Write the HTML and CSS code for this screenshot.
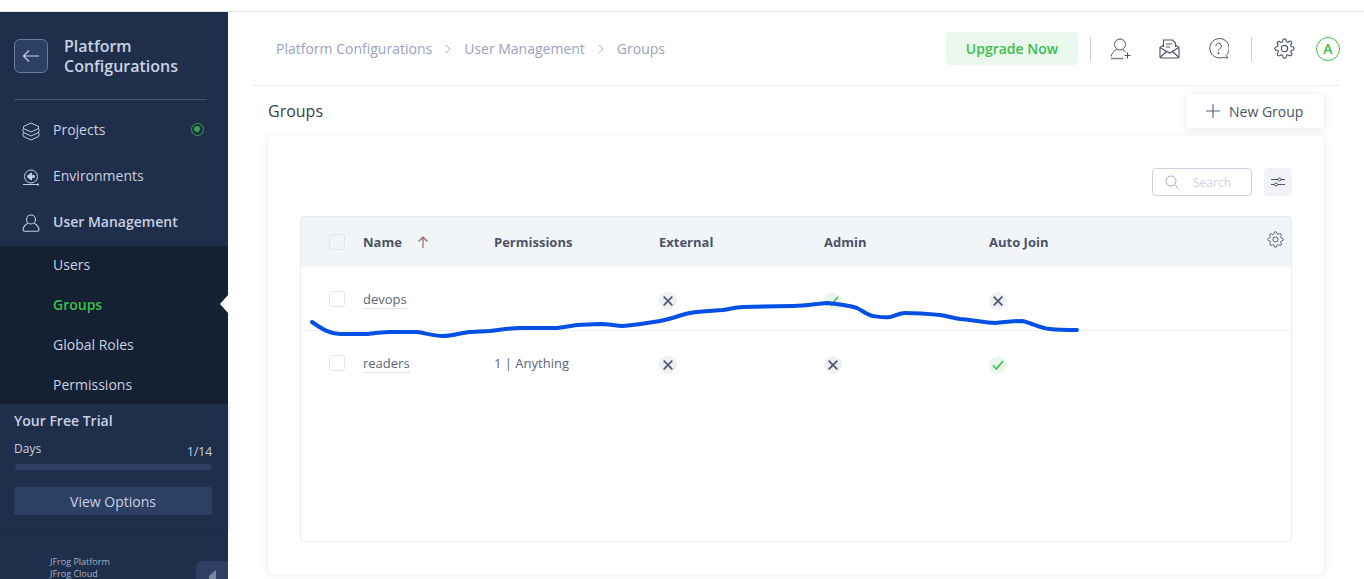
FILE: index.html
```html
<!DOCTYPE html>
<html lang="en">
<head>
  <meta charset="UTF-8" />
  <title>Groups</title>
  <link rel="stylesheet" href="styles.css">
</head>
<body>
  <div class="topStrip"></div>

  <div class="app">
    <aside class="sidebar">
      <div class="sideTitle">
        <div class="backBtn">
          <svg width="18" height="14" viewBox="0 0 18 14" fill="none" stroke="#c5cde0" stroke-width="1.2"><path d="M17 7H1.5M7 1.5 1.5 7 7 12.5"/></svg>
        </div>
        <div class="titleText">Platform Configurations</div>
      </div>
      <div class="sideLine"></div>

      <div class="navItem">
        <svg class="navIcon" width="18" height="19" viewBox="0 0 18 19" fill="none" stroke="#c5cde0" stroke-width="1"><path d="M9 1 16.500 4.500V6.500L9 10 1.500 6.500V4.500zM1.500 6.500 .8 8.500 1.500 10.500 9 14 16.500 10.500 17.200 8.500 16.500 6.500M1.500 10.500 .8 12.500 1.500 14.500 9 18 16.500 14.500 17.200 12.500 16.500 10.500"/></svg>
        <span>Projects</span>
        <span class="navDot"></span>
      </div>
      <div class="navItem">
        <svg class="navIcon" width="18" height="18" viewBox="0 0 18 18" fill="none" stroke="#c5cde0" stroke-width="1"><circle cx="9" cy="8.500" r="6.500"/><path d="M1 16.500H17M15.500 15.500l1.500 1-1.500 1"/><path d="M5.800 7.500 9.500 5V12L5.800 9.500z" fill="#c5cde0"/><circle cx="11.300" cy="8.500" r="1.300" fill="#c5cde0"/></svg>
        <span>Environments</span>
      </div>
      <div class="navItem navActive">
        <svg class="navIcon" width="18" height="18" viewBox="0 0 18 18" fill="none" stroke="#c5cde0" stroke-width="1.1"><circle cx="9" cy="5.500" r="4.500"/><path d="M5.800 9.200C3.500 10.500 1.200 13.500 1 15.500c0 1 .6 1.700 1.600 1.700h12.800c1 0 1.600-.7 1.600-1.700-.2-2-2.500-5-4.800-6.300"/></svg>
        <span>User Management</span>
      </div>

      <div class="subNav">
        <div class="subItem">Users</div>
        <div class="subItem subActive">Groups</div>
        <div class="subItem">Global Roles</div>
        <div class="subItem">Permissions</div>
      </div>

      <div class="trial">
        <div class="trialTitle">Your Free Trial</div>
        <div class="trialRow">
          <span>Days</span>
          <span class="trialCount">1/14</span>
        </div>
        <div class="trialBar"></div>
        <div class="trialBtn">View Options</div>
      </div>

      <div class="sideFoot">
        <div class="footText">
          <div>JFrog Platform</div>
          <div>JFrog Cloud</div>
        </div>
        <div class="collapseTab"><span class="collapseArrow"></span></div>
      </div>
    </aside>

    <main class="main">
      <header class="topBar">
        <div class="crumbs">
          <span>Platform Configurations</span>
          <svg width="6" height="10" viewBox="0 0 6 10" fill="none" stroke="#a9b0c6" stroke-width="1"><path d="M1 1l4 4-4 4"/></svg>
          <span>User Management</span>
          <svg width="6" height="10" viewBox="0 0 6 10" fill="none" stroke="#a9b0c6" stroke-width="1"><path d="M1 1l4 4-4 4"/></svg>
          <span>Groups</span>
        </div>
        <div class="topActions">
          <div class="upgradeBtn">Upgrade Now</div>
          <div class="vLine firstLine"></div>
          <svg class="addUser" width="22" height="22" viewBox="0 0 22 22" fill="none" stroke="#4c5368" stroke-width="1"><circle cx="10" cy="6.500" r="5.500"/><path d="M6.500 11.500C4 13 1.500 15.500 1 18.500"/><path d="M1 20.500h12.500" stroke="#7d8394" stroke-width="1.500"/><path d="M13 12c1 .5 1.800 1.200 2.500 2M17.500 14.500v6M14.500 17.500h6"/></svg>
          <svg class="mailIcon" width="21" height="20" viewBox="0 0 21 20" fill="none" stroke="#4c5368" stroke-width="1.100"><path d="M4.500 8V1h9l3 3v4"/><path d="M7 5h6M7 8h4"/><path d="M4.500 6 1 8.500V18a1 1 0 0 0 1 1h17a1 1 0 0 0 1-1V8.500L16.500 6"/><path d="M1 8.500 10.500 14 20 8.500M1 18.500 8 12M20 18.500 13 12"/></svg>
          <svg class="helpIcon" width="21" height="21" viewBox="0 0 21 21" fill="none" stroke="#4c5368" stroke-width="1"><path d="M18 17.500A9.700 9.700 0 1 0 14.500 19.500L20 20z"/><path d="M7.800 8a2.800 2.800 0 1 1 4.200 2.500c-1 .6-1.500 1.100-1.500 2.200"/><circle cx="10.500" cy="15.200" r=".6" fill="#4c5368"/></svg>
          <div class="vLine secondLine"></div>
          <svg class="gearIcon" width="21" height="21" viewBox="0 0 24 24" fill="none" stroke="#4c5368" stroke-width="1.300"><circle cx="12" cy="12" r="3.600"/><path d="M19.400 15a1.650 1.650 0 0 0 .33 1.820l.06.06a2 2 0 1 1-2.830 2.830l-.06-.06a1.650 1.650 0 0 0-2.800 1.170V21a2 2 0 1 1-4 0v-.09A1.650 1.650 0 0 0 7.300 19.700l-.06.06a2 2 0 1 1-2.830-2.830l.06-.06A1.650 1.650 0 0 0 3.090 14H3a2 2 0 1 1 0-4h.09A1.650 1.650 0 0 0 4.300 7.300l-.06-.06a2 2 0 1 1 2.830-2.830l.06.06A1.650 1.650 0 0 0 10 3.090V3a2 2 0 1 1 4 0v.09a1.650 1.650 0 0 0 2.800 1.170l.06-.06a2 2 0 1 1 2.830 2.830l-.06.06A1.650 1.650 0 0 0 20.910 10H21a2 2 0 1 1 0 4h-.09a1.650 1.650 0 0 0-1.510 1z"/></svg>
          <div class="avatar">A</div>
        </div>
      </header>

      <div class="pageHead">
        <h1 class="pageTitle">Groups</h1>
        <div class="newBtn">
          <svg width="14" height="14" viewBox="0 0 14 14" fill="none" stroke="#5a5f70" stroke-width="1.100"><path d="M7 0v14M0 7h14"/></svg>
          <span>New Group</span>
        </div>
      </div>

      <section class="card">
        <div class="toolbar">
          <div class="searchBox">
            <svg width="14" height="14" viewBox="0 0 14 14" fill="none" stroke="#a7aec2" stroke-width="1"><circle cx="6" cy="6" r="5"/><path d="M9.700 9.700 13.500 13.500"/></svg>
            <span>Search</span>
          </div>
          <div class="filterBtn">
            <svg width="14" height="10" viewBox="0 0 14 10" fill="none" stroke="#4c5368" stroke-width="1"><path d="M0 2.500h14M0 7.500h14"/><circle cx="8.500" cy="2.500" r="1.500" fill="#f0f2f7"/><circle cx="5" cy="7.500" r="1.500" fill="#f0f2f7"/></svg>
          </div>
        </div>

        <div class="grid">
          <div class="row headRow">
            <div class="cellCheck"><span class="check headCheck"></span></div>
            <div class="nameHead">Name
              <svg width="12" height="12" viewBox="0 0 12 12" fill="none" stroke="#8a5f5f" stroke-width="1.100"><path d="M6 12V1M1.500 5.500 6 1l4.500 4.500"/></svg>
            </div>
            <div>Permissions</div>
            <div>External</div>
            <div>Admin</div>
            <div>Auto Join</div>
            <svg class="colGear" width="17" height="17" viewBox="0 0 24 24" fill="none" stroke="#4c5368" stroke-width="1.300"><circle cx="12" cy="12" r="3.600"/><path d="M19.400 15a1.650 1.650 0 0 0 .33 1.820l.06.06a2 2 0 1 1-2.830 2.830l-.06-.06a1.650 1.650 0 0 0-2.800 1.170V21a2 2 0 1 1-4 0v-.09A1.650 1.650 0 0 0 7.300 19.700l-.06.06a2 2 0 1 1-2.830-2.830l.06-.06A1.650 1.650 0 0 0 3.090 14H3a2 2 0 1 1 0-4h.09A1.650 1.650 0 0 0 4.300 7.300l-.06-.06a2 2 0 1 1 2.830-2.830l.06.06A1.650 1.650 0 0 0 10 3.090V3a2 2 0 1 1 4 0v.09a1.650 1.650 0 0 0 2.800 1.170l.06-.06a2 2 0 1 1 2.830 2.830l-.06.06A1.650 1.650 0 0 0 20.910 10H21a2 2 0 1 1 0 4h-.09a1.650 1.650 0 0 0-1.510 1z"/></svg>
          </div>

          <div class="row bodyRow lined">
            <div class="cellCheck"><span class="check"></span></div>
            <div><span class="groupName">devops</span></div>
            <div></div>
            <div><span class="status no"><svg width="10" height="10" viewBox="0 0 10 10" fill="none" stroke="#565d72" stroke-width="1.900"><path d="M.7.7l8.600 8.600M9.300.7.7 9.300"/></svg></span></div>
            <div><span class="status yes"><svg width="12" height="10" viewBox="0 0 12 10" fill="none" stroke="#3fbe4f" stroke-width="1.600"><path d="M1 5.500 4.300 9 11 1"/></svg></span></div>
            <div><span class="status no"><svg width="10" height="10" viewBox="0 0 10 10" fill="none" stroke="#565d72" stroke-width="1.900"><path d="M.7.7l8.600 8.600M9.300.7.7 9.300"/></svg></span></div>
          </div>

          <div class="row bodyRow">
            <div class="cellCheck"><span class="check"></span></div>
            <div><span class="groupName">readers</span></div>
            <div>1 | Anything</div>
            <div><span class="status no"><svg width="10" height="10" viewBox="0 0 10 10" fill="none" stroke="#565d72" stroke-width="1.900"><path d="M.7.7l8.600 8.600M9.300.7.7 9.300"/></svg></span></div>
            <div><span class="status no"><svg width="10" height="10" viewBox="0 0 10 10" fill="none" stroke="#565d72" stroke-width="1.900"><path d="M.7.7l8.600 8.600M9.300.7.7 9.300"/></svg></span></div>
            <div><span class="status yes"><svg width="12" height="10" viewBox="0 0 12 10" fill="none" stroke="#3fbe4f" stroke-width="1.600"><path d="M1 5.500 4.300 9 11 1"/></svg></span></div>
          </div>
        </div>
      </section>
    </main>
  </div>

  <!-- pen stroke drawn over the screenshot -->
  <svg class="scribble" width="1364" height="579" viewBox="0 0 1364 579" fill="none" stroke="#0450e4" stroke-width="4" stroke-linecap="round" stroke-linejoin="round">
    <path d="M312 322C322 329 330 334 340 334L367 334C375 333 382 332 390 332L417 332C425 333 433 336 443 336C452 336 460 333 470 332L490 331C500 330 510 328 520 328L557 328C565 327 570 326 577 325L600 324C610 324 615 326 623 326C636 325 648 323 660 321C672 319 680 315 690 313C702 311 712 311 723 310C730 309 736 307 743 307L793 306C805 306 815 304 827 303C838 304 848 305 857 308C863 311 867 315 873 316C880 317 885 318 890 317C895 316 900 313 905 313C917 313 930 314 940 315C947 316 953 318 960 319C972 320 984 322 995 323C1004 322 1013 321 1022 321C1032 323 1040 328 1050 329C1059 330 1068 330 1077 330"/>
  </svg>
</body>
</html>
```

FILE: styles.css
```css
* {
  box-sizing: border-box;
}

html, body {
  margin: 0;
  height: 579px;
  overflow: hidden;
}

body {
  position: relative;
  background-color: #fff;
  font-family: "Open Sans", Arial, sans-serif;
  font-size: 14px;
  color: #5a6072;
}

.topStrip {
  height: 12px;
  border-bottom: 1px solid #e3e4e8;
}

.app {
  display: flex;
  height: 567px;
}

/* sidebar */
.sidebar {
  display: flex;
  flex-direction: column;
  width: 228px;
  flex-shrink: 0;
  background-color: #1f2e4a;
  color: #c9d1e3;
}

.sideTitle {
  display: flex;
  gap: 16px;
  padding: 24px 14px 0;
  height: 87px;
}

.backBtn {
  display: flex;
  align-items: center;
  justify-content: center;
  width: 34px;
  height: 34px;
  margin-top: 3px;
  background-color: #2d4064;
  border: 1px solid #6b7a98;
  border-radius: 6px;
}

.titleText {
  width: 130px;
  font-size: 16px;
  font-weight: 600;
  line-height: 20px;
  color: #c9d1e3;
}

.sideLine {
  height: 1px;
  margin: 0 21px 0 14px;
  background-color: #45536f;
}

.navItem {
  display: flex;
  align-items: center;
  gap: 13px;
  height: 46px;
  padding-left: 22px;
  padding-right: 24px;
}

.sideLine + .navItem {
  margin-top: 6px;
}

.navIcon {
  margin-top: 4px;
}

.navActive {
  height: 48px;
  padding-bottom: 2px;
  font-weight: 600;
}

.navDot {
  position: relative;
  width: 13px;
  height: 13px;
  margin-left: auto;
  border: 1.500px solid #36a447;
  border-radius: 50%;
}

.navDot::after {
  content: "";
  position: absolute;
  left: 2px;
  top: 2px;
  width: 6px;
  height: 6px;
  background-color: #36a447;
  border-radius: 50%;
}

.subNav {
  height: 158px;
  background-color: #152032;
}

.subItem {
  position: relative;
  display: flex;
  align-items: center;
  height: 40px;
  padding-left: 53px;
}

.subItem:first-child {
  margin-top: -2px;
}

.subActive {
  color: #3fbe4f;
  font-weight: 600;
}

.subActive::after {
  content: "";
  position: absolute;
  right: 0;
  top: 11px;
  border-top: 9px solid transparent;
  border-bottom: 9px solid transparent;
  border-right: 8px solid #fff;
}

.trial {
  height: 127px;
  padding: 7px 16px 0 14px;
  background-color: #1f2e4a;
  box-shadow: 1px 0 4px rgba(0,0,0,0.12);
}

.trialTitle {
  font-weight: 600;
  line-height: 20px;
}

.trialRow {
  display: flex;
  justify-content: space-between;
  margin-top: 10px;
  font-size: 12px;
  line-height: 16px;
}

.trialCount {
  margin-top: 3px;
}

.trialBar {
  height: 6px;
  margin: 4px 0 17px 1px;
  background-color: #2d4064;
  border-radius: 3px;
}

.trialBtn {
  height: 28px;
  line-height: 29px;
  text-align: center;
  background-color: #2d4064;
  border-radius: 3px;
}

.sideFoot {
  display: flex;
  flex: 1;
  justify-content: space-between;
  align-items: flex-end;
  padding-left: 50px;
}

.footText {
  margin-bottom: -1px;
  font-size: 9px;
  line-height: 12px;
  color: #a7b0c6;
}

.collapseTab {
  display: flex;
  align-items: flex-end;
  justify-content: center;
  width: 32px;
  height: 18px;
  background-color: #2d4064;
  border-top-left-radius: 6px;
}

.collapseArrow {
  border-top: 6px solid transparent;
  border-bottom: 0 solid transparent;
  border-right: 7px solid #7c88a3;
  height: 9px;
}

/* main area */
.main {
  flex: 1;
  min-width: 0;
  padding: 0 24px;
}

.topBar {
  display: flex;
  align-items: center;
  justify-content: space-between;
  height: 74px;
  padding-left: 24px;
  border-bottom: 1px solid #eceef5;
}

.crumbs {
  display: flex;
  align-items: center;
  gap: 13px;
  color: #9ba3bc;
}

.topActions {
  display: flex;
  align-items: center;
}

.upgradeBtn {
  width: 132px;
  height: 33px;
  line-height: 33px;
  text-align: center;
  font-weight: 600;
  color: #3fbe4f;
  background-color: #e9f7ec;
  border-radius: 4px;
}

.vLine {
  width: 1px;
  height: 24px;
  background-color: #c9ccd4;
}

.firstLine {
  margin-left: 12px;
}

.addUser {
  margin-left: 19px;
}

.mailIcon {
  margin-left: 27px;
}

.helpIcon {
  margin-left: 28px;
}

.secondLine {
  margin-left: 22px;
}

.gearIcon {
  margin-left: 22px;
}

.avatar {
  width: 24px;
  height: 24px;
  margin-left: 21px;
  line-height: 22px;
  text-align: center;
  font-size: 14px;
  font-weight: 600;
  color: #3fbe4f;
  border: 1px solid #3fbe4f;
  border-radius: 50%;
}

.pageHead {
  display: flex;
  align-items: flex-start;
  justify-content: space-between;
  height: 50px;
  padding: 8px 16px 0;
}

.pageTitle {
  margin: 6px 0 0;
  font-size: 16px;
  font-weight: 400;
  line-height: 22px;
  color: #3b3f4a;
}

.newBtn {
  display: flex;
  align-items: center;
  gap: 9px;
  width: 138px;
  height: 34px;
  padding-left: 20px;
  color: #4c5368;
  background-color: #fff;
  border-radius: 4px;
  box-shadow: 0 1px 8px rgba(60,70,100,0.14);
}

.card {
  height: 438px;
  margin: 0 16px;
  padding: 32px;
  background-color: #fff;
  border-radius: 4px;
  box-shadow: 0 1px 10px rgba(60,70,100,0.1);
}

.toolbar {
  display: flex;
  justify-content: flex-end;
  gap: 12px;
  height: 28px;
  margin-bottom: 20px;
}

.searchBox {
  display: flex;
  align-items: center;
  gap: 14px;
  width: 100px;
  padding-left: 12px;
  font-size: 12px;
  color: #ccd2e6;
  border: 1px solid #ccd2e6;
  border-radius: 4px;
}

.filterBtn {
  display: flex;
  align-items: center;
  justify-content: center;
  width: 28px;
  background-color: #f0f2f7;
  border-radius: 4px;
}

.grid {
  height: 326px;
  border: 1px solid #e8ebf2;
  border-radius: 4px;
}

.row {
  display: grid;
  grid-template-columns: 62px 131px 165px 165px 165px 1fr;
  align-items: center;
}

.headRow {
  position: relative;
  height: 50px;
  font-size: 13px;
  font-weight: 700;
  color: #4c5368;
  background-color: #f2f5f8;
}

.nameHead {
  display: flex;
  align-items: center;
  gap: 15px;
}

.colGear {
  position: absolute;
  right: 7px;
  top: 14px;
}

.bodyRow {
  height: 64px;
  font-size: 13px;
  color: #5e6476;
}

.lined {
  height: 64px;
  border-bottom: 1px solid #eef0f4;
}

.cellCheck {
  padding-left: 28px;
}

.check {
  display: block;
  width: 16px;
  height: 16px;
  background-color: #fff;
  border: 1px solid #e1e3ee;
  border-radius: 3px;
}

.headCheck {
  background-color: #f2f5f8;
}

.groupName {
  border-bottom: 1px solid #dfe1e7;
}

.status {
  display: flex;
  align-items: center;
  justify-content: center;
  width: 18px;
  height: 18px;
  margin-top: 4px;
  border-radius: 50%;
}

.no {
  background-color: #eef0f3;
}

.yes {
  background-color: #e9f7ec;
}

.scribble {
  position: absolute;
  left: 0;
  top: 0;
  pointer-events: none;
}
```
